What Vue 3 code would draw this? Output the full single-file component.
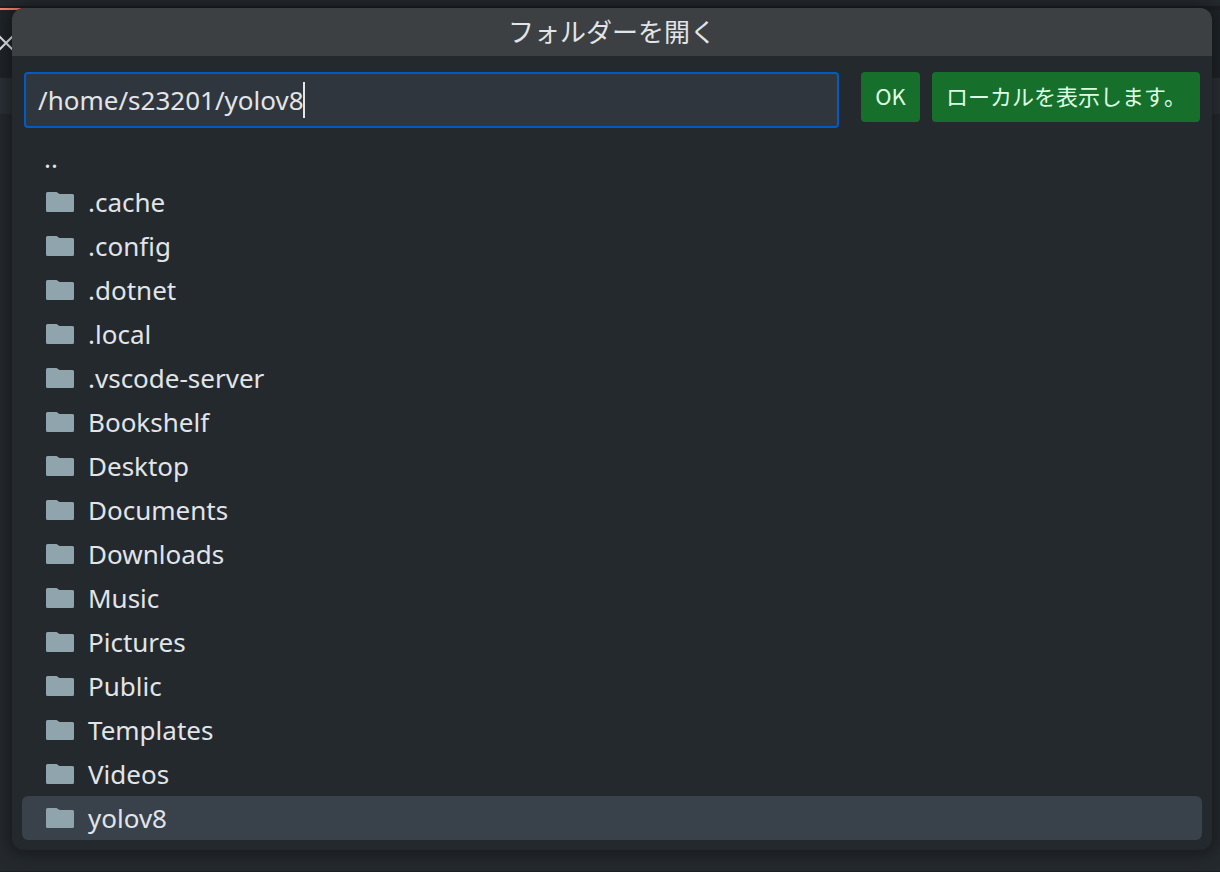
<template>
  <div class="workbench">
    <div class="title-strip">
      <span class="active-tab"></span>
    </div>
    <div class="tab-strip">
      <svg class="close-icon" width="14" height="20" viewBox="0 0 14 20">
        <path d="M-2 1L14 17M-2 17L14 1" />
      </svg>
    </div>
    <div class="breadcrumb-strip"></div>
    <div class="editor"></div>

    <div class="quick-input">
      <div class="quick-title">フォルダーを開く</div>
      <div class="quick-header">
        <div class="path-input">
          <span>{{ path }}</span><span class="caret"></span>
        </div>
        <button class="ok-button">OK</button>
        <button class="local-button">ローカルを表示します。</button>
      </div>
      <ul class="folder-list">
        <li class="parent" @click="goUp">..</li>
        <li
          v-for="folder in folders"
          :key="folder"
          :class="{ active: folder === selected }"
          @click="selectFolder(folder)"
        >
          <svg class="folder-icon" width="28" height="20" viewBox="0 0 28 20">
            <path d="M1.5 0H10.5L13.5 2H26.5Q28 2 28 3.5V18.5Q28 20 26.5 20H1.5Q0 20 0 18.5V1.5Q0 0 1.5 0Z" />
          </svg>
          <span>{{ folder }}</span>
        </li>
      </ul>
    </div>
  </div>
</template>

<script setup>
import { ref } from 'vue';

const home = '/home/s23201/';
const folders = ['.cache', '.config', '.dotnet', '.local', '.vscode-server', 'Bookshelf', 'Desktop', 'Documents', 'Downloads', 'Music', 'Pictures', 'Public', 'Templates', 'Videos', 'yolov8'];
const selected = ref('yolov8');
const path = ref(home + 'yolov8');

const selectFolder = (folder) => {
  selected.value = folder;
  path.value = home + folder;
};

const goUp = () => {
  selected.value = '';
  path.value = '/home/';
};
</script>

<style>
body {
  margin: 0;
  background-color: #24292e;
}
</style>

<style scoped>
.workbench {
  position: relative;
  display: flex;
  flex-direction: column;
  width: 100%;
  height: 872px;
  overflow: hidden;
  box-sizing: border-box;
  border-bottom: 1px solid #1b1f23;
  background-color: #24292e;
  font-family: "Noto Sans", "Noto Sans CJK JP", sans-serif;
  color: #e1e4e8;
}

.title-strip {
  height: 10px;
  flex: none;
  display: flex;
  align-items: flex-end;
  background: linear-gradient(#24292e 6px, #1b1f23 6px);
}

.active-tab {
  width: 60px;
  height: 2px;
  background-color: #f9826c;
}

.tab-strip {
  height: 68px;
  flex: none;
  display: flex;
  align-items: center;
  box-sizing: border-box;
  background-color: #1f2428;
}

.close-icon {
  fill: none;
  stroke: #e1e4e8;
  stroke-width: 2;
}

.breadcrumb-strip {
  height: 36px;
  flex: none;
  background-color: #2b3036;
}

.editor {
  flex: 1;
  background-color: #24292e;
}

/* The dialog floats over the editor */
.quick-input {
  position: absolute;
  top: 8px;
  left: 12px;
  width: 1200px;
  height: 842px;
  overflow: hidden;
  border-radius: 12px;
  background-color: #24292e;
  box-shadow: 0 0 16px 4px rgba(0, 0, 0, 0.36);
}

.quick-title {
  height: 48px;
  line-height: 48px;
  text-align: center;
  font-size: 26px;
  background-color: #3c4043;
}

.quick-header {
  display: flex;
  align-items: flex-start;
  padding: 16px 12px 8px;
}

.path-input {
  display: flex;
  align-items: center;
  width: 815px;
  height: 56px;
  box-sizing: border-box;
  margin-right: 22px;
  padding-left: 12px;
  border: 2px solid #005cc5;
  border-radius: 4px;
  background-color: #2f363d;
  font-size: 26px;
  line-height: 36px;
}

.caret {
  width: 2px;
  height: 36px;
  margin-left: -1px;
  background-color: #e1e4e8;
}

button {
  height: 50px;
  padding: 0 0 4px;
  border: none;
  border-radius: 4px;
  background-color: #176f2c;
  color: #dcffe4;
  font-family: "Noto Sans CJK JP", sans-serif;
  font-size: 22px;
  line-height: 46px;
  white-space: nowrap;
  cursor: pointer;
}

.ok-button {
  width: 59px;
  margin-right: 12px;
}

.local-button {
  width: 268px;
}

.folder-list {
  list-style: none;
  margin: 0;
  padding: 0 10px;
}

li {
  display: flex;
  align-items: center;
  gap: 14px;
  height: 44px;
  box-sizing: border-box;
  padding-left: 24px;
  border-radius: 6px;
  font-size: 26px;
  line-height: 44px;
  cursor: pointer;
}

li.parent {
  padding-left: 22px;
}

li.active {
  background-color: #39414a;
}

.folder-icon {
  fill: #90a4ae;
}
</style>
